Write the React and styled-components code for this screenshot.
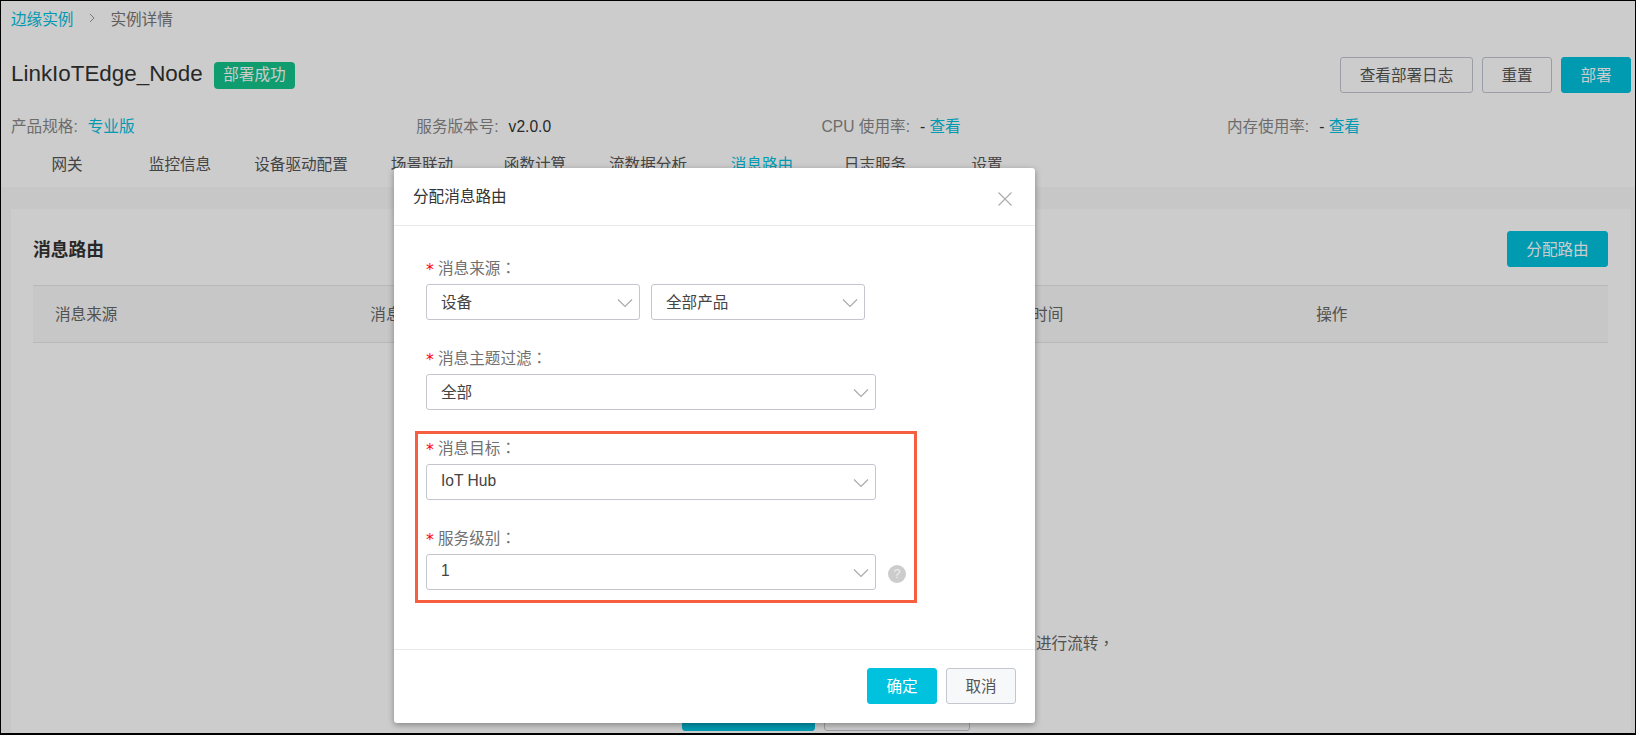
import React from "react";
import styled, { createGlobalStyle } from "styled-components";

const FONT = `"Liberation Sans", "Noto Sans CJK SC", sans-serif`;

const Global = createGlobalStyle`
  html, body { margin: 0; padding: 0; background: #fff; }
  * { box-sizing: border-box; }
  body { font-family: ${FONT}; font-size: 15.6px; color: #333; overflow: hidden; }
`;

const Frame = styled.div`
  position: relative;
  width: 1636px;
  height: 735px;
  border: 1px solid #000;
  border-bottom-width: 2px;
  overflow: hidden;
  background: #fff;
`;
const Header = styled.header`
  padding: 0 4px 0 10px;
  height: 186px;
`;
const Crumbs = styled.nav`
  display: flex;
  align-items: center;
  height: 35px;
  padding-bottom: 2px;
  color: #777;
`;
const Link = styled.a`
  color: #00c1de;
`;
const Sep = styled.svg`
  width: 10px;
  height: 10px;
  margin: 0 13px 0 14px;
`;
const TitleRow = styled.div`
  display: flex;
  align-items: center;
  justify-content: space-between;
  margin-top: 21px;
  height: 36px;
`;
const TitleGroup = styled.div`
  display: flex;
  align-items: center;
  gap: 11px;
`;
const Title = styled.h1`
  margin: 0 0 2px;
  font-size: 22.4px;
  font-weight: 400;
  color: #333;
`;
const Tag = styled.span`
  height: 27px;
  line-height: 26px;
  padding: 0 9.5px;
  border-radius: 4px;
  background: #13c48a;
  color: #fff;
`;
const Actions = styled.div`
  display: flex;
  gap: 9px;
`;
const Button = styled.button`
  height: 36px;
  width: ${(p) => p.$w || 70}px;
  font: inherit;
  border-radius: 3px;
  border: 1px solid ${(p) => (p.$primary ? "#00c1de" : "#c4c6cf")};
  background: ${(p) => (p.$primary ? "#00c1de" : p.$muted ? "#f7f8fa" : "#fff")};
  color: ${(p) => (p.$primary ? "#fff" : "#555")};
  padding: 0 0 3px;
`;
const Meta = styled.div`
  display: grid;
  grid-template-columns: repeat(4, 405.3px);
  margin-top: 24px;
  color: #888;
  line-height: 20px;
`;
const MetaItem = styled.div`
  display: flex;
  gap: 10px;
`;
const MetaValue = styled.span`
  color: #333;
`;
const Tabs = styled.div`
  display: flex;
  margin-top: 18px;
`;
const Tab = styled.div`
  width: ${(p) => p.$w}px;
  text-align: center;
  line-height: 20px;
  color: ${(p) => (p.$active ? "#00c1de" : "#555")};
`;
const Main = styled.main`
  height: 546px;
  padding: 22px 4px 0 10px;
  background: #f9f9f9;
`;
const Card = styled.section`
  height: 100%;
  padding: 22px 23px 0 22px;
  background: #fff;
`;
const CardHead = styled.div`
  display: flex;
  align-items: center;
  justify-content: space-between;
`;
const CardTitle = styled.h2`
  margin: 0 0 3px;
  font-size: 17.8px;
  font-weight: 700;
  color: #333;
`;
const TableHead = styled.div`
  display: grid;
  grid-template-columns: repeat(5, 315.3px);
  align-items: center;
  margin-top: 18px;
  height: 58px;
  padding: 0 0 3px 22px;
  background: #f9f9f9;
  border-top: 1px solid #e6e6e6;
  border-bottom: 1px solid #e6e6e6;
  color: #666;
`;
const Empty = styled.div`
  margin-top: 291px;
  padding-left: 1003px;
  color: #666;
  line-height: 20px;
`;
const Punct = styled.span`
  font-family: "Liberation Sans", "Noto Sans CJK TC", sans-serif;
`;
const EmptyActions = styled.div`
  display: flex;
  gap: 9px;
  margin: 41px 0 0 649px;
`;
const Overlay = styled.div`
  position: absolute;
  inset: 0;
  background: rgba(0, 0, 0, 0.2);
`;
const Dialog = styled.div`
  position: absolute;
  left: 393px;
  top: 167px;
  width: 641px;
  height: 555px;
  background: #fff;
  border-radius: 3px;
  box-shadow: 0 2px 6px rgba(0, 0, 0, 0.35);
  display: flex;
  flex-direction: column;
`;
const DialogHead = styled.div`
  height: 58px;
  flex: none;
  display: flex;
  align-items: center;
  justify-content: space-between;
  padding: 0 23px 3px 19px;
  border-bottom: 1px solid #e9e9e9;
  color: #333;
`;
const CloseIcon = styled.svg`
  width: 14px;
  height: 14px;
  margin-top: 8px;
`;
const DialogBody = styled.div`
  flex: 1;
  padding: 32px 0 0 32px;
`;
const Field = styled.div`
  margin-bottom: ${(p) => p.$gap ?? 28}px;
`;
const Label = styled.label`
  display: flex;
  align-items: center;
  height: 20px;
  padding-bottom: 3px;
  margin-bottom: 6px;
  color: #707070;
  &::before {
    content: "*";
    color: #f00;
    width: 12px;
    font-family: "DejaVu Sans", sans-serif;
    transform: translateY(3px);
  }
`;
const Row = styled.div`
  display: flex;
  align-items: center;
  gap: ${(p) => p.$gap ?? 11}px;
`;
const Select = styled.div`
  width: ${(p) => p.$w}px;
  height: 36px;
  flex: none;
  display: flex;
  align-items: center;
  justify-content: space-between;
  padding: 0 6px 3px 14px;
  border: 1px solid #c4c6cf;
  border-radius: 3px;
  color: #444;
`;
const Chevron = styled.svg`
  width: 16px;
  height: 10px;
  margin-top: 5px;
`;
const Highlight = styled.div`
  width: 502px;
  height: 172px;
  margin: 0 0 0 -11px;
  padding: 4px 0 0 8px;
  border: 3px solid #f55f3f;
`;
const Help = styled.span`
  width: 18px;
  height: 18px;
  margin-top: 3px;
  border-radius: 50%;
  background: #ccc;
  color: #eee;
  font-size: 13px;
  line-height: 18px;
  text-align: center;
`;
const DialogFoot = styled.div`
  height: 74px;
  flex: none;
  display: flex;
  justify-content: flex-end;
  gap: 9px;
  padding: 18px 19px 0 0;
  border-top: 1px solid #e9e9e9;
`;

const ChevronDown = () => (
  <Chevron viewBox="0 0 16 10">
    <path d="M1 1.5 L8 8.5 L15 1.5" fill="none" stroke="#aaa" strokeWidth="1.2" />
  </Chevron>
);

const tabs = [
  ["网关", 112],
  ["监控信息", 114],
  ["设备驱动配置", 128],
  ["场景联动", 114],
  ["函数计算", 112],
  ["流数据分析", 114],
  ["消息路由", 114],
  ["日志服务", 112],
  ["设置", 112],
];

export default function App() {
  return (
    <Frame>
      <Global />
      <Header>
        <Crumbs>
          <Link>边缘实例</Link>
          <Sep viewBox="0 0 10 10">
            <path d="M3 1 L7 5 L3 9" fill="none" stroke="#999" strokeWidth="1" />
          </Sep>
          <span>实例详情</span>
        </Crumbs>
        <TitleRow>
          <TitleGroup>
            <Title>LinkIoTEdge_Node</Title>
            <Tag>部署成功</Tag>
          </TitleGroup>
          <Actions>
            <Button $w={133}>查看部署日志</Button>
            <Button>重置</Button>
            <Button $primary>部署</Button>
          </Actions>
        </TitleRow>
        <Meta>
          <MetaItem>产品规格: <Link>专业版</Link></MetaItem>
          <MetaItem>服务版本号: <MetaValue>v2.0.0</MetaValue></MetaItem>
          <MetaItem>CPU 使用率: <span><MetaValue>- </MetaValue><Link>查看</Link></span></MetaItem>
          <MetaItem>内存使用率: <span><MetaValue>- </MetaValue><Link>查看</Link></span></MetaItem>
        </Meta>
        <Tabs>
          {tabs.map(([t, w]) => (
            <Tab key={t} $w={w} $active={t === "消息路由"}>{t}</Tab>
          ))}
        </Tabs>
      </Header>
      <Main>
        <Card>
          <CardHead>
            <CardTitle>消息路由</CardTitle>
            <Button $primary $w={101}>分配路由</Button>
          </CardHead>
          <TableHead>
            <div>消息来源</div>
            <div>消息主题过滤</div>
            <div>消息目标</div>
            <div>创建时间</div>
            <div>操作</div>
          </TableHead>
          <Empty>进行流转<Punct>，</Punct></Empty>
          <EmptyActions>
            <Button $primary $w={133}>分配路由</Button>
            <Button $w={146}>查看文档</Button>
          </EmptyActions>
        </Card>
      </Main>
      <Overlay />
      <Dialog>
        <DialogHead>
          分配消息路由
          <CloseIcon viewBox="0 0 14 14">
            <path d="M0.5 0.5 L13.5 13.5 M13.5 0.5 L0.5 13.5" stroke="#aaa" strokeWidth="1.1" fill="none" />
          </CloseIcon>
        </DialogHead>
        <DialogBody>
          <Field>
            <Label>消息来源<Punct>：</Punct></Label>
            <Row>
              <Select $w={214}>设备<ChevronDown /></Select>
              <Select $w={214}>全部产品<ChevronDown /></Select>
            </Row>
          </Field>
          <Field $gap={21}>
            <Label>消息主题过滤<Punct>：</Punct></Label>
            <Select $w={450}>全部<ChevronDown /></Select>
          </Field>
          <Highlight>
            <Field>
              <Label>消息目标<Punct>：</Punct></Label>
              <Select $w={450}>IoT Hub<ChevronDown /></Select>
            </Field>
            <Field $gap={0}>
              <Label>服务级别<Punct>：</Punct></Label>
              <Row $gap={12}>
                <Select $w={450}>1<ChevronDown /></Select>
                <Help>?</Help>
              </Row>
            </Field>
          </Highlight>
        </DialogBody>
        <DialogFoot>
          <Button $primary>确定</Button>
          <Button $muted>取消</Button>
        </DialogFoot>
      </Dialog>
    </Frame>
  );
}
